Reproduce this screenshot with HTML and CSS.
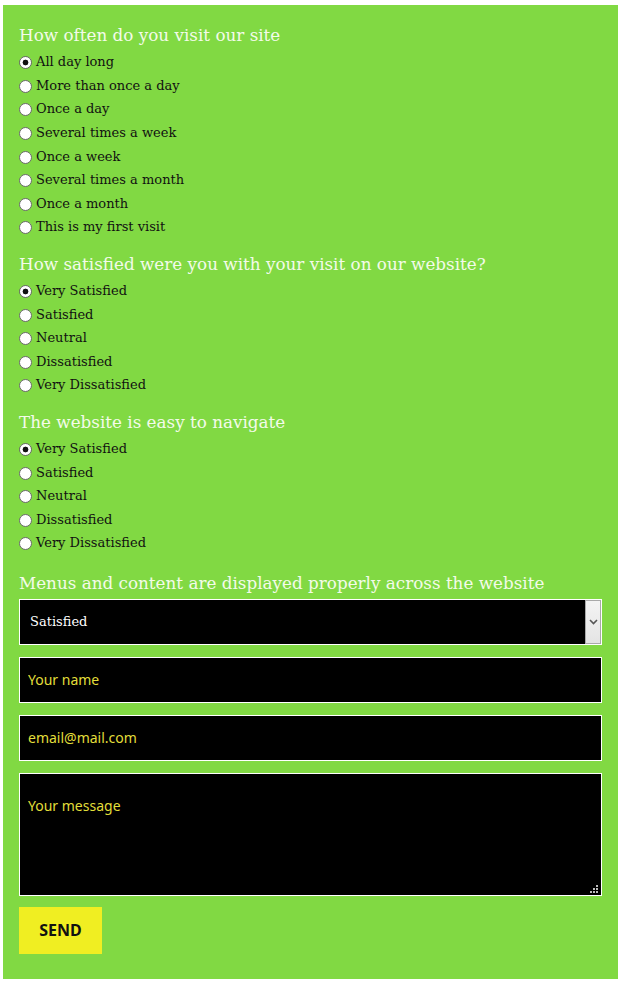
FILE: index.html
```html
<!DOCTYPE html>
<html lang="en">
<head>
<meta charset="utf-8">
<title>Survey</title>
<link rel="stylesheet" href="styles.css">
</head>
<body>
<form class="survey">
  <div class="group">
    <h3 class="q-title">How often do you visit our site</h3>
    <label class="opt"><input type="radio" name="q1" checked><span>All day long</span></label>
    <label class="opt"><input type="radio" name="q1"><span>More than once a day</span></label>
    <label class="opt"><input type="radio" name="q1"><span>Once a day</span></label>
    <label class="opt"><input type="radio" name="q1"><span>Several times a week</span></label>
    <label class="opt"><input type="radio" name="q1"><span>Once a week</span></label>
    <label class="opt"><input type="radio" name="q1"><span>Several times a month</span></label>
    <label class="opt"><input type="radio" name="q1"><span>Once a month</span></label>
    <label class="opt"><input type="radio" name="q1"><span>This is my first visit</span></label>
  </div>
  <div class="group">
    <h3 class="q-title">How satisfied were you with your visit on our website?</h3>
    <label class="opt"><input type="radio" name="q2" checked><span>Very Satisfied</span></label>
    <label class="opt"><input type="radio" name="q2"><span>Satisfied</span></label>
    <label class="opt"><input type="radio" name="q2"><span>Neutral</span></label>
    <label class="opt"><input type="radio" name="q2"><span>Dissatisfied</span></label>
    <label class="opt"><input type="radio" name="q2"><span>Very Dissatisfied</span></label>
  </div>
  <div class="group">
    <h3 class="q-title">The website is easy to navigate</h3>
    <label class="opt"><input type="radio" name="q3" checked><span>Very Satisfied</span></label>
    <label class="opt"><input type="radio" name="q3"><span>Satisfied</span></label>
    <label class="opt"><input type="radio" name="q3"><span>Neutral</span></label>
    <label class="opt"><input type="radio" name="q3"><span>Dissatisfied</span></label>
    <label class="opt"><input type="radio" name="q3"><span>Very Dissatisfied</span></label>
  </div>
  <div class="group group-last">
    <h3 class="q-title">Menus and content are displayed properly across the website</h3>
    <div class="select-wrap">
      <select class="select">
        <option>Very Satisfied</option>
        <option selected>Satisfied</option>
        <option>Neutral</option>
        <option>Dissatisfied</option>
        <option>Very Dissatisfied</option>
      </select>
      <span class="select-btn" aria-hidden="true">
        <svg width="9" height="6" viewBox="0 0 9 6"><path d="M1 1 L4.5 4.5 L8 1" fill="none" stroke="#555" stroke-width="1.6"/></svg>
      </span>
    </div>
  </div>
  <input class="field" type="text" placeholder="Your name">
  <input class="field" type="email" placeholder="email@mail.com">
  <textarea class="field message" placeholder="Your message"></textarea>
  <button class="send" type="button">SEND</button>
</form>
</body>
</html>
```
FILE: styles.css
```css
html, body {
  margin: 0;
  padding: 0;
  background: #ffffff;
}

.survey {
  width: 615px;
  box-sizing: border-box;
  margin: 5px 0 0 3px;
  padding: 18px 16px 25px;
  background: #81d943;
  display: flex;
  flex-direction: column;
}

.group {
  display: flex;
  flex-direction: column;
  margin-bottom: 13px;
}

.group-last {
  margin-top: 3px;
  margin-bottom: 0;
}

.q-title {
  margin: 0 0 3px;
  font-family: "DejaVu Serif", "Liberation Serif", serif;
  font-weight: normal;
  font-size: 16.8px;
  line-height: 24px;
  color: #f3fbe9;
}

.group-last .q-title {
  margin-bottom: 4px;
}

.opt {
  display: flex;
  align-items: center;
  height: 23.6px;
  font-family: "DejaVu Serif", "Liberation Serif", serif;
  font-size: 13px;
  color: #111;
}

.opt input {
  appearance: none;
  -webkit-appearance: none;
  width: 13px;
  height: 13px;
  margin: 2px 4px 0 0;
  border: 1px solid #6a6a6a;
  border-radius: 50%;
  background: #ffffff;
  box-sizing: border-box;
  flex: none;
}

.opt input:checked {
  background: radial-gradient(circle, #111 0 2.6px, #ffffff 3.2px);
}

.select-wrap {
  position: relative;
  height: 46px;
  margin-bottom: 12px;
}

.select {
  appearance: none;
  -webkit-appearance: none;
  width: 100%;
  height: 46px;
  box-sizing: border-box;
  border: 1px solid #ffffff;
  border-radius: 0;
  background: #000000;
  color: #ffffff;
  font-family: "DejaVu Serif", "Liberation Serif", serif;
  font-size: 13px;
  padding: 0 0 0 10px;
  outline: none;
}

.select-btn {
  position: absolute;
  top: 1px;
  right: 1px;
  width: 16px;
  height: 44px;
  box-sizing: border-box;
  border: 1px solid #a9a9a9;
  background: linear-gradient(#f4f4f4, #e4e4e4);
  display: flex;
  align-items: center;
  justify-content: center;
}

.field {
  display: block;
  width: 100%;
  height: 46px;
  box-sizing: border-box;
  margin: 0 0 12px;
  border: 1px solid #ffffff;
  border-radius: 0;
  background: #000000;
  color: #e8e43c;
  font-family: "Noto Sans", "Open Sans", sans-serif;
  font-size: 14px;
  padding: 0 8px;
  outline: none;
}

.field::placeholder {
  color: #e2de3a;
  opacity: 1;
}

.message {
  height: 123px;
  padding: 22px 8px;
  margin-bottom: 11px;
  resize: none;
  background: #000000 url("data:image/svg+xml,%3Csvg xmlns='http://www.w3.org/2000/svg' width='8' height='8'%3E%3Cg fill='%23bbbbbb'%3E%3Crect x='6' y='0' width='2' height='2'/%3E%3Crect x='3' y='3' width='2' height='2'/%3E%3Crect x='6' y='3' width='2' height='2'/%3E%3Crect x='0' y='6' width='2' height='2'/%3E%3Crect x='3' y='6' width='2' height='2'/%3E%3Crect x='6' y='6' width='2' height='2'/%3E%3C/g%3E%3C/svg%3E") no-repeat right 3px bottom 2px;
}

.send {
  align-self: flex-start;
  width: 83px;
  height: 47px;
  border: none;
  border-radius: 0;
  background: #f0ee22;
  color: #111;
  font-family: "Noto Sans", "Open Sans", sans-serif;
  font-weight: bold;
  font-size: 16px;
  padding: 0;
}
```
